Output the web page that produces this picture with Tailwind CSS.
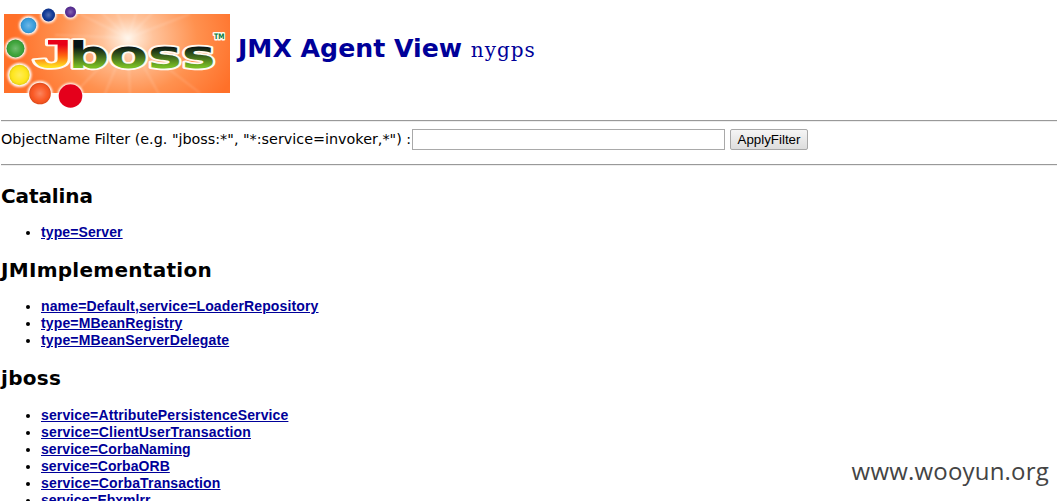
<!DOCTYPE html>
<html lang="en">
<head>
<meta charset="utf-8">
<title>JMX Agent View</title>
<script src="https://cdn.jsdelivr.net/npm/@tailwindcss/browser@4"></script>
</head>
<body class="h-[501px] overflow-hidden bg-white text-black font-['DejaVu_Sans',sans-serif] relative">
<header class="flex h-[120px]">
<svg class="w-[236px] h-[116px] shrink-0" viewBox="0 0 236 116">
<defs>
<radialGradient id="bg" gradientUnits="userSpaceOnUse" cx="128" cy="38" r="115" gradientTransform="translate(0 7) scale(1 .82)"><stop offset="0" stop-color="#fff4e8"/><stop offset=".22" stop-color="#ffc39b"/><stop offset=".6" stop-color="#ff914f"/><stop offset="1" stop-color="#ff7029"/></radialGradient>
<linearGradient id="j" x2="0" y2="1"><stop offset=".3" stop-color="#e80018"/><stop offset=".55" stop-color="#ff6510"/><stop offset=".8" stop-color="#ffe020"/></linearGradient>
<linearGradient id="k" gradientUnits="userSpaceOnUse" x1="0" x2="0" y1="43" y2="68"><stop offset=".15" stop-color="#071414"/><stop offset=".95" stop-color="#79bd25"/></linearGradient>
<radialGradient id="shine"><stop offset="0" stop-color="#fff" stop-opacity=".3"/><stop offset=".7" stop-color="#fff" stop-opacity=".05"/><stop offset="1" stop-color="#000" stop-opacity=".12"/></radialGradient>
<filter id="soft"><feGaussianBlur stdDeviation="1"/></filter>
<clipPath id="panel"><path d="M4 14h226v79H4z"/></clipPath>
</defs>
<path fill="url(#bg)" d="M4 14h226v79H4z"/>
<g clip-path="url(#panel)" stroke="#fff" stroke-opacity=".18" stroke-width="1.5" filter="url(#soft)"><path d="M128 38 80 14M128 38 97 8M128 38 115 8M128 38 138 8M128 38 157 8M128 38 190 14M128 38 55 35M128 38 200 93M128 38 160 96M128 38 130 96M128 38 104 96M128 38 72 96"/></g>
<g fill="#fff" filter="url(#soft)"><circle cx="70.500" cy="12" r="7"/><circle cx="48.500" cy="15" r="8"/><circle cx="28.500" cy="25.500" r="9.500"/><circle cx="15.500" cy="48.500" r="10.500"/><circle cx="19.500" cy="75" r="12"/><circle cx="40" cy="93.500" r="12.500"/><circle cx="70.500" cy="96" r="13"/></g>
<g><circle cx="70.500" cy="12" r="5.500" fill="#51258f"/><circle cx="48.500" cy="15" r="6.500" fill="#063091"/><circle cx="28.500" cy="25.500" r="7.800" fill="#3199db"/><circle cx="15.500" cy="48.500" r="9" fill="#35a032"/><circle cx="19.500" cy="75" r="10.200" fill="#ffe512"/><circle cx="40" cy="93.500" r="10.800" fill="#fa5019"/><circle cx="70.500" cy="96" r="11.800" fill="#e4001b"/></g>
<g fill="url(#shine)"><circle cx="70.500" cy="12" r="5.500"/><circle cx="48.500" cy="15" r="6.500"/><circle cx="28.500" cy="25.500" r="7.800"/><circle cx="15.500" cy="48.500" r="9"/><circle cx="19.500" cy="75" r="10.200"/><circle cx="40" cy="93.500" r="10.800"/></g>
<g stroke-linejoin="round" paint-order="stroke" stroke="#fffaf0" stroke-width="3.500" font-weight="700">
<text x="33.500" y="67.500" font-family="Liberation Sans" font-size="40" fill="url(#j)" textLength="39" lengthAdjust="spacingAndGlyphs">J</text>
<text x="68.500" y="67.500" font-family="DejaVu Sans" font-size="38" fill="url(#k)" textLength="147" lengthAdjust="spacingAndGlyphs">boss</text>
<text x="214" y="39" font-family="DejaVu Sans" font-size="7.500" stroke-width="3" fill="#087b3a" textLength="10.500" lengthAdjust="spacingAndGlyphs">TM</text>
</g>
</svg>
<h1 class="pl-[2px] pt-[33px] text-[25.200px] leading-8 font-bold text-[#000099] whitespace-nowrap">JMX Agent View <span class="font-['DejaVu_Serif',serif] text-[20px] font-normal tracking-[1px]">nygps</span></h1>
</header>
<hr class="ml-px h-[2px] border-0 border-t border-[#999] bg-[#eee]">
<form class="flex h-[42px] pl-px pt-[7px]">
<label for="filter" class="w-[411px] shrink-0 text-[14.350px] leading-[20px] whitespace-nowrap">ObjectName Filter (e.g. "jboss:*", "*:service=invoker,*") :</label>
<input id="filter" class="h-[21px] w-[313px] border border-[#a9a9a9]">
<button type="button" class="ml-[5px] h-[21px] w-[78px] rounded-[2px] border border-[#a8a8a8] bg-linear-to-b from-[#f5f5f5] to-[#ddd] font-['Liberation_Sans',sans-serif] text-[13.333px] leading-[19px]">ApplyFilter</button>
</form>
<hr class="ml-px h-[2px] border-0 border-t border-[#999] bg-[#eee]">
<main class="pl-px">
<h2 class="mt-[17px] h-[26px] text-[20px] leading-[26px] font-bold tracking-[-0.1px]">Catalina</h2>
<ul class="mt-[15px] list-disc pl-10 font-['Liberation_Sans',sans-serif] text-[14px] leading-[17px] tracking-[0.1px]">
<li><a href="#" class="font-bold text-[#000099] underline">type=Server</a></li>
</ul>
<h2 class="mt-[16px] h-[26px] text-[20px] leading-[26px] font-bold tracking-[0.28px]">JMImplementation</h2>
<ul class="mt-[15px] list-disc pl-10 font-['Liberation_Sans',sans-serif] text-[14px] leading-[17px] tracking-[0.14px]">
<li><a href="#" class="font-bold text-[#000099] underline">name=Default,service=LoaderRepository</a></li>
<li><a href="#" class="font-bold text-[#000099] underline">type=MBeanRegistry</a></li>
<li><a href="#" class="font-bold text-[#000099] underline">type=MBeanServerDelegate</a></li>
</ul>
<h2 class="mt-[16px] h-[26px] text-[20px] leading-[26px] font-bold tracking-[0.28px]">jboss</h2>
<ul class="mt-[16px] list-disc pl-10 font-['Liberation_Sans',sans-serif] text-[14px] leading-[17px]">
<li><a href="#" class="font-bold tracking-[0.12px] text-[#000099] underline">service=AttributePersistenceService</a></li>
<li><a href="#" class="font-bold tracking-[0.17px] text-[#000099] underline">service=ClientUserTransaction</a></li>
<li><a href="#" class="font-bold tracking-[0.08px] text-[#000099] underline">service=CorbaNaming</a></li>
<li><a href="#" class="font-bold tracking-[0.05px] text-[#000099] underline">service=CorbaORB</a></li>
<li><a href="#" class="font-bold tracking-[0.17px] text-[#000099] underline">service=CorbaTransaction</a></li>
<li><a href="#" class="font-bold text-[#000099] underline">service=Ebxmlrr</a></li>
</ul>
</main>
<div class="absolute right-[8px] bottom-[14px] font-['Open_Sans',sans-serif] text-[24px] leading-8 tracking-[0.2px] text-[#444]">www.wooyun.org</div>
</body>
</html>
